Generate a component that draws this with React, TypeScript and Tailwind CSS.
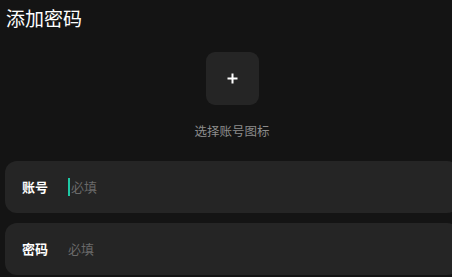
const font = { fontFamily: '"Noto Sans CJK SC", "Noto Sans", sans-serif' };

const Field = ({ label, focused }: { label: string; focused?: boolean }) => (
  <div className="flex h-[52px] items-center rounded-[12px] bg-[#252525] pl-[17px]">
    <span className="w-[46px] text-[13px] font-bold text-white">{label}</span>
    <div className="flex items-center">
      {focused && <span className="mr-[1px] h-[18px] w-[2px] bg-[#1ec8a5]" />}
      <span className="text-[13px] text-[#6a6a6a]">必填</span>
    </div>
  </div>
);

export default function App() {
  return (
    <div className="h-[277px] w-[452px] overflow-hidden bg-[#141414]" style={font}>
      <div className="w-[464px] px-[5px]">
        <h1 className="pl-[1px] pt-[4px] text-[19px] leading-[28px] text-white">添加密码</h1>
        <div className="mt-[20px] flex flex-col items-center">
          <button className="flex h-[53px] w-[53px] items-center justify-center rounded-[9px] bg-[#252525]">
            <svg width="11" height="11" viewBox="0 0 11 11">
              <path d="M5.5 0.5v10M0.5 5.5h10" stroke="#fff" strokeWidth="2" />
            </svg>
          </button>
          <span className="mt-[17px] text-[12.5px] leading-[18px] text-[#8c8c8c]">选择账号图标</span>
        </div>
        <div className="mt-[21px] flex flex-col gap-[10px]">
          <Field label="账号" focused />
          <Field label="密码" />
        </div>
      </div>
    </div>
  );
}
